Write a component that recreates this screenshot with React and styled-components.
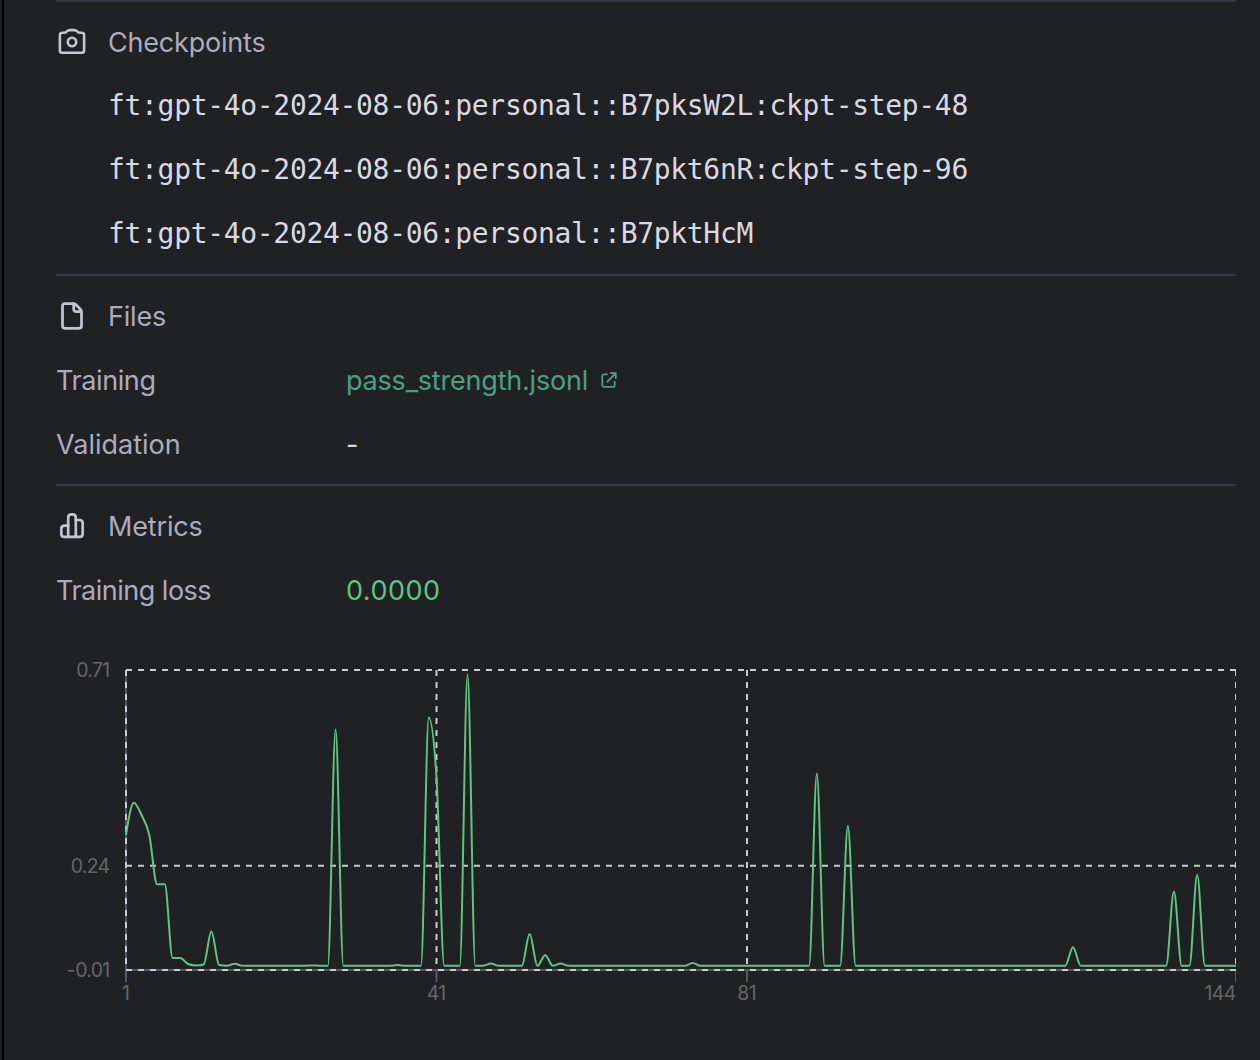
import React from "react";
import styled, { createGlobalStyle } from "styled-components";

const GlobalStyle = createGlobalStyle`
  html, body {
    margin: 0;
    background: #202123;
  }
  body {
    overflow: hidden;
  }
`;

const Panel = styled.main`
  box-sizing: border-box;
  width: 1258px;
  height: 1060px;
  margin-left: 2px;
  padding: 0 24px 0 52px;
  border-left: 2px solid #000;
  background: #202123;
  color: #acacbe;
  font-family: Inter, "Liberation Sans", sans-serif;
  font-size: 27px;
  line-height: 32px;
`;

const Section = styled.section`
  display: flex;
  flex-direction: column;
  gap: 32px;
  box-sizing: border-box;
  height: ${(p) => p.$height};
  padding-top: 25px;
  border-top: 2px solid #353740;
`;

const Heading = styled.h2`
  display: flex;
  align-items: center;
  gap: 20px;
  height: 32px;
  margin: 0;
  font: inherit;
  svg {
    flex: none;
    margin: -2px 0 0;
    color: #c5c5d2;
  }
`;

const Label = styled.span`
  white-space: nowrap;
  letter-spacing: ${(p) => p.$track || "0"};
`;

const Checkpoints = styled.ul`
  display: flex;
  flex-direction: column;
  gap: 32px;
  margin: -1px 0 0;
  padding: 0 0 0 52px;
  list-style: none;
`;

const Checkpoint = styled.li`
  color: #d9d9e3;
  font-family: "DejaVu Sans Mono", monospace;
  font-size: 28px;
  letter-spacing: -0.32px;
  white-space: nowrap;
`;

const Row = styled.div`
  display: grid;
  grid-template-columns: 290px 1fr;
  height: 32px;
`;

const FileLink = styled.a`
  display: flex;
  align-items: center;
  gap: 12px;
  color: #4aa181;
  svg {
    margin-top: -2px;
  }
`;

const Value = styled.span`
  color: ${(p) => p.$color};
  letter-spacing: ${(p) => p.$track || "0"};
`;

const Chart = styled.svg`
  display: block;
  width: 1180px;
  height: 370px;
  margin-top: 11px;
  text {
    fill: #666;
    font-family: Inter, "Liberation Sans", sans-serif;
    font-size: 19.5px;
    font-weight: 400;
    letter-spacing: -0.7px;
  }
`;

const stroke = {
  fill: "none",
  stroke: "currentColor",
  strokeLinecap: "round",
  strokeLinejoin: "round",
};

const CameraIcon = () => (
  <svg width="32" height="32" viewBox="0 0 32 32" {...stroke} strokeWidth="2.6">
    <path d="M6.2 6.8h2.1c.8 0 1.5-.3 2-.9l.6-.6c.8-.8 1.6-1.2 2.7-1.2h4.8c1.1 0 1.9.4 2.7 1.2l.6.6c.5.6 1.2.9 2 .9h2.1a2.300 2.300 0 0 1 2.300 2.300v15.400a2.300 2.300 0 0 1-2.300 2.300H6.200a2.300 2.300 0 0 1-2.300-2.300V9.100a2.300 2.300 0 0 1 2.300-2.300z" />
    <circle cx="16" cy="16" r="4.2" />
  </svg>
);

const FileIcon = () => (
  <svg width="32" height="32" viewBox="0 0 32 32" {...stroke} strokeWidth="2.7">
    <path d="M9 3.700h8.500c1 0 1.800.4 2.500 1.100l4.400 4.400c.7.700 1.100 1.500 1.100 2.500V25.800a2.500 2.500 0 0 1-2.500 2.500H9A2.500 2.500 0 0 1 6.500 25.800V6.200A2.500 2.500 0 0 1 9 3.700z" />
    <path d="M17.700 3.900v5.400a2.300 2.300 0 0 0 2.300 2.300h5.300" />
  </svg>
);

const MetricsIcon = () => (
  <svg width="32" height="32" viewBox="0 0 32 32" {...stroke} strokeWidth="2.7">
    <path d="M12.200 26.900V7.700c0-2 1.300-3.300 3.300-3.300h1c2 0 3.300 1.300 3.300 3.300v19.200" />
    <path d="M12.200 15.600H8.500c-2 0-3.200 1.200-3.200 3.200v4.900c0 2 1.200 3.200 3.200 3.200h15c2 0 3.200-1.200 3.200-3.200V13.200c0-2-1.200-3.200-3.200-3.200h-3.700" />
  </svg>
);

const ExternalIcon = () => (
  <svg width="18" height="18" viewBox="0 0 18 18" {...stroke} strokeWidth="1.8">
    <path d="M7 3.300H4A1.700 1.700 0 0 0 2.300 5v9.200A1.700 1.700 0 0 0 4 15.900h9a1.700 1.700 0 0 0 1.700-1.700v-3.600" />
    <path d="M7.500 10.500l8.300-8.300M10.800 2.200h5v5" />
  </svg>
);

const LEFT = 70;
const TOP = 20;
const BOTTOM = 320;
const STEP = 1110 / 143;
const BASE = 315.8;

// Vertical positions of the steps whose loss is above the baseline.
const RAISED = {
  0: 185, 1: 152.7, 2: 165, 3: 185, 4: 234.2, 5: 234.2, 6: 308, 7: 308,
  8: 314, 9: 315.5, 10: 314.5, 11: 281.5, 12: 315, 14: 313.8, 24: 315.4,
  27: 79.5, 35: 315, 39: 67.5, 40: 127, 44: 24.5, 47: 313.5, 52: 284,
  54: 305.2, 56: 313.5, 73: 313, 89: 123.5, 93: 176, 122: 297.3,
  135: 241.5, 138: 224.8,
};

const points = Array.from({ length: 144 }, (_, i) => [
  LEFT + i * STEP,
  RAISED[i] ?? BASE,
]);

// Monotone cubic interpolation, so that flat runs stay flat beside a spike.
function monotonePath(pts) {
  const n = pts.length;
  const slopes = [];
  for (let i = 0; i < n - 1; i++) {
    slopes.push((pts[i + 1][1] - pts[i][1]) / (pts[i + 1][0] - pts[i][0]));
  }
  const tangents = pts.map((_, i) => {
    if (i === 0 || i === n - 1) return 0;
    const a = slopes[i - 1];
    const b = slopes[i];
    if (a * b <= 0) return 0;
    return Math.sign(a) * Math.min(Math.abs(a), Math.abs(b), Math.abs(a + b) / 4) * 2;
  });
  tangents[0] = (3 * slopes[0] - tangents[1]) / 2;
  tangents[n - 1] = (3 * slopes[n - 2] - tangents[n - 2]) / 2;
  let d = `M${pts[0][0]},${pts[0][1]}`;
  for (let i = 0; i < n - 1; i++) {
    const [x0, y0] = pts[i];
    const [x1, y1] = pts[i + 1];
    const h = (x1 - x0) / 3;
    d += `C${x0 + h},${y0 + h * tangents[i]},${x1 - h},${y1 - h * tangents[i + 1]},${x1},${y1}`;
  }
  return d;
}

const yTicks = [
  { y: 20, text: "0.71" },
  { y: 215.8, text: "0.24" },
  { y: 320, text: "-0.01" },
];
const xTicks = [
  { step: 0, text: "1", anchor: "middle" },
  { step: 40, text: "41", anchor: "middle" },
  { step: 80, text: "81", anchor: "middle" },
  { step: 143, text: "144", anchor: "end" },
];

const LossChart = () => (
  <Chart viewBox="0 0 1180 370">
    <g stroke="#565869" strokeWidth="2">
      <path d={`M${LEFT} ${TOP}V${BOTTOM}H1180`} fill="none" />
      {xTicks.map((t) => (
        <path key={t.text} d={`M${LEFT + t.step * STEP} ${BOTTOM}v12`} />
      ))}
    </g>
    <g stroke="#ccc" strokeWidth="2" strokeDasharray="6 6">
      {yTicks.map((t) => (
        <path key={t.text} d={`M${LEFT} ${t.y}H1180`} />
      ))}
      {xTicks.map((t) => (
        <path key={t.text} d={`M${LEFT + t.step * STEP} ${TOP}V${BOTTOM}`} />
      ))}
    </g>
    <path d={monotonePath(points)} fill="none" stroke="#5dc686" strokeWidth="2" />
    {yTicks.map((t) => (
      <text key={t.text} x="53.500" y={t.y + 7.4} textAnchor="end">
        {t.text}
      </text>
    ))}
    {xTicks.map((t) => (
      <text key={t.text} x={LEFT + t.step * STEP - 0.4} y="350.400" textAnchor={t.anchor}>
        {t.text}
      </text>
    ))}
  </Chart>
);

const checkpoints = [
  "ft:gpt-4o-2024-08-06:personal::B7pksW2L:ckpt-step-48",
  "ft:gpt-4o-2024-08-06:personal::B7pkt6nR:ckpt-step-96",
  "ft:gpt-4o-2024-08-06:personal::B7pktHcM",
];

export default function App() {
  return (
    <>
      <GlobalStyle />
      <Panel>
        <Section $height="274px">
          <Heading>
            <CameraIcon />
            <Label $track="-0.2px">Checkpoints</Label>
          </Heading>
          <Checkpoints>
            {checkpoints.map((id) => (
              <Checkpoint key={id}>{id}</Checkpoint>
            ))}
          </Checkpoints>
        </Section>
        <Section $height="210px">
          <Heading>
            <FileIcon />
            <Label $track="-0.2px">Files</Label>
          </Heading>
          <Row>
            <Label $track="-0.4px">Training</Label>
            <FileLink>
              <Label $track="-0.2px">pass_strength.jsonl</Label>
              <ExternalIcon />
            </FileLink>
          </Row>
          <Row>
            <Label>Validation</Label>
            <Value $color="#d9d9e3">-</Value>
          </Row>
        </Section>
        <Section $height="576px">
          <Heading>
            <MetricsIcon />
            <Label $track="-0.15px">Metrics</Label>
          </Heading>
          <Row>
            <Label $track="-0.5px">Training loss</Label>
            <Value $color="#5dc686" $track="0.5px">0.0000</Value>
          </Row>
          <LossChart />
        </Section>
      </Panel>
    </>
  );
}
